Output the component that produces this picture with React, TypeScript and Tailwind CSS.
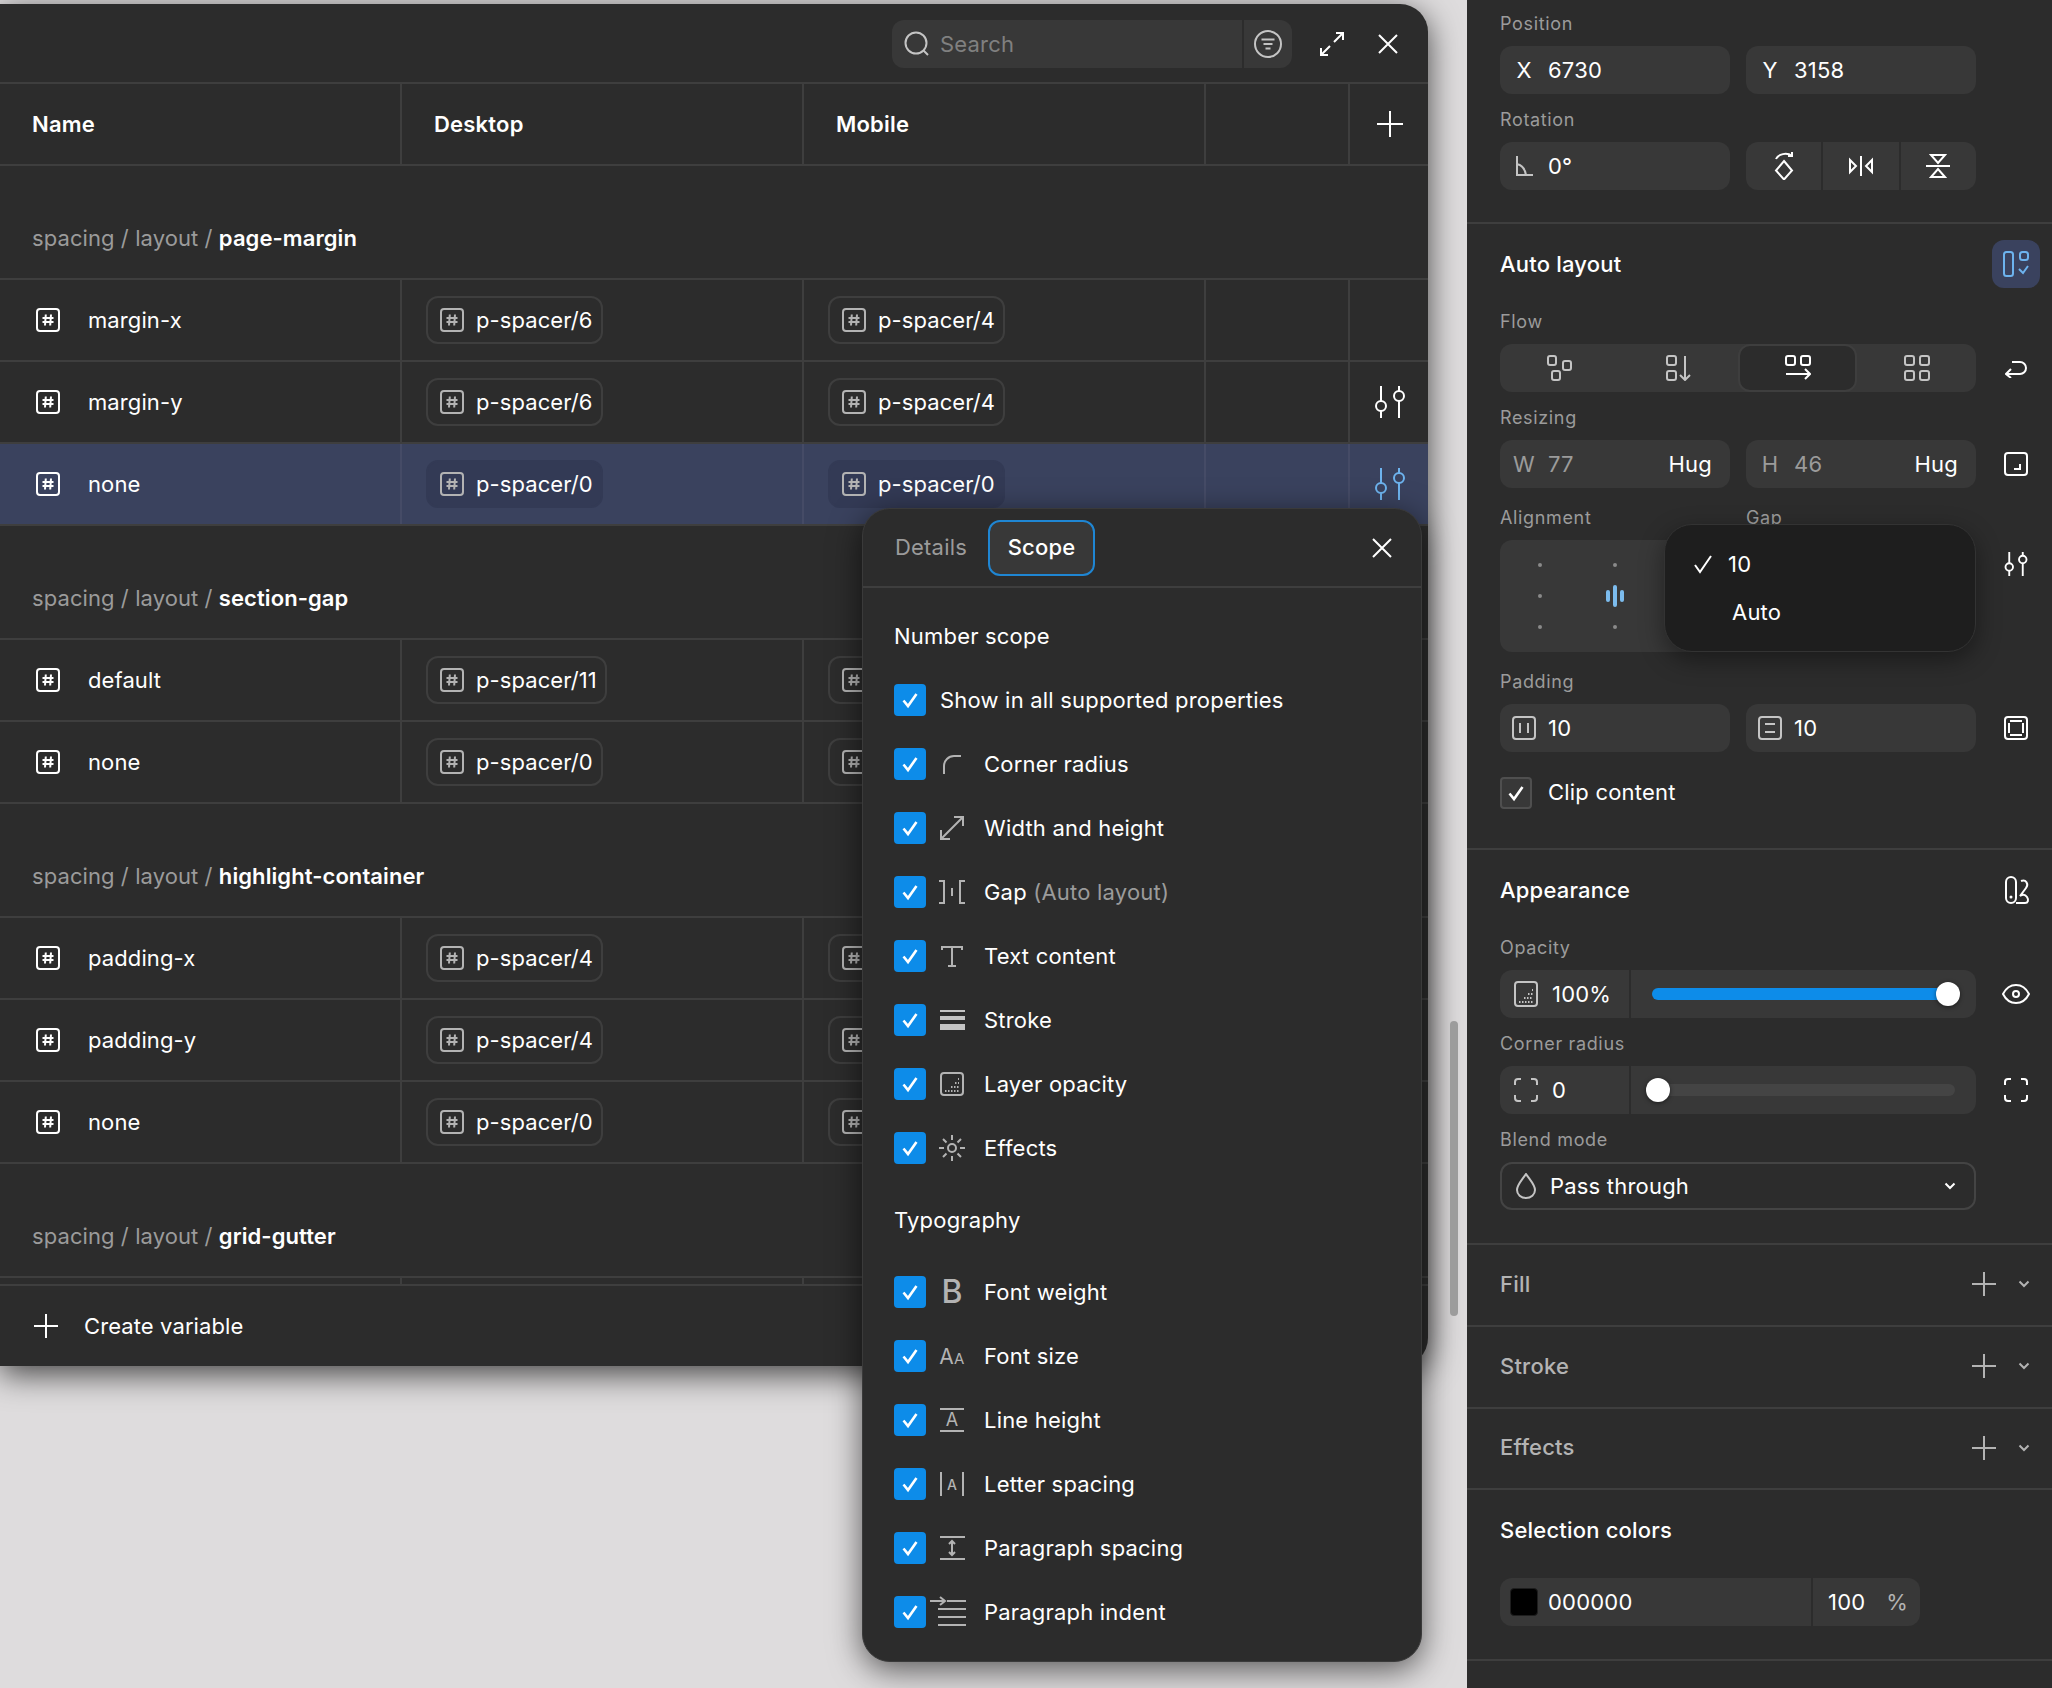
import type { ReactNode } from 'react';

const gridCols = 'grid grid-cols-[400px_402px_402px_144px_80px]';

function Svg({ w, h, className, children, sw = 2 }: { w: number; h: number; className?: string; children: ReactNode; sw?: number }) {
  return (
    <svg width={w} height={h} viewBox={`0 0 ${w} ${h}`} fill="none" stroke="currentColor" strokeWidth={sw} className={`shrink-0 ${className ?? ''}`}>
      {children}
    </svg>
  );
}

function HashIcon({ className }: { className?: string }) {
  return (
    <Svg w={24} h={24} className={className}>
      <rect x="1" y="1" width="22" height="22" rx="3" />
      <path d="M9.8 6.5 9 17.5M15 6.5l-.8 11M6.5 10h11M6.5 14h11" />
    </Svg>
  );
}

function SlidersIcon({ className, small }: { className?: string; small?: boolean }) {
  return (
    <svg width={small ? 24 : 30} height={small ? 24 : 32} viewBox="0 0 30 32" fill="none" stroke="currentColor" strokeWidth={small ? 2.5 : 2} className={`shrink-0 ${className ?? ''}`}>
      <path d="M6 0v15M6 25v7M24 0v5M24 15v17" />
      <circle cx="6" cy="20" r="5" />
      <circle cx="24" cy="10" r="5" />
    </svg>
  );
}

function CloseIcon() {
  return (
    <Svg w={22} h={22} className="text-white">
      <path d="M2 2l18 18M20 2L2 20" />
    </Svg>
  );
}

function PlusIcon({ size = 26, className }: { size?: number; className?: string }) {
  const m = size / 2;
  return (
    <Svg w={size} h={size} className={className}>
      <path d={`M${m} 0v${size}M0 ${m}h${size}`} />
    </Svg>
  );
}

function Chevron({ className }: { className?: string }) {
  return (
    <Svg w={12} h={8} className={className}>
      <path d="M1.5 1.5 6 6l4.5-4.5" />
    </Svg>
  );
}

function Chip({ value, selected }: { value: string; selected?: boolean }) {
  return (
    <div className={`inline-flex h-12 items-center gap-3 rounded-xl border-2 pl-3 pr-2 ${selected ? 'border-[#333a55] bg-[#333a55]' : 'border-[#3e3e3e]'}`}>
      <HashIcon className="text-[#b3b3b3]" />
      <span className="text-[22px] leading-none tracking-[0.08px] text-white">{value}</span>
    </div>
  );
}

type RowData = { name: string; desktop: string; mobile: string; tune?: boolean; selected?: boolean };

function Row({ name, desktop, mobile, tune, selected }: RowData) {
  const cell = `flex items-center border-l-2 ${selected ? 'border-[#454b66]' : 'border-[#3e3e3e]'}`;
  return (
    <div className={`${gridCols} h-[82px] border-b-2 border-[#3e3e3e] ${selected ? 'bg-[#3a425e]' : ''}`}>
      <div className="flex items-center pl-9">
        <HashIcon className="text-white" />
        <span className="ml-7 text-[22px] tracking-[0.1px] text-white">{name}</span>
      </div>
      <div className={`${cell} pl-6`}><Chip value={`p-spacer/${desktop}`} selected={selected} /></div>
      <div className={`${cell} pl-6`}><Chip value={`p-spacer/${mobile}`} selected={selected} /></div>
      <div className={cell} />
      <div className={`${cell} justify-center pl-[2px]`}>
        {tune && <SlidersIcon className={selected ? 'text-[#6db3ee]' : 'text-white'} />}
      </div>
    </div>
  );
}

function GroupTitle({ name }: { name: string }) {
  return (
    <div className="flex h-[114px] items-end border-b-2 border-[#3e3e3e] pb-[28px] pl-8 text-[22px] leading-[24px] tracking-[0.08px] text-[#9b9b9b]">
      <span>spacing / layout /&nbsp;</span>
      <span className="font-semibold text-white">{name}</span>
    </div>
  );
}

const pageMargin: RowData[] = [
  { name: 'margin-x', desktop: '6', mobile: '4' },
  { name: 'margin-y', desktop: '6', mobile: '4', tune: true },
  { name: 'none', desktop: '0', mobile: '0', tune: true, selected: true },
];
const sectionGap: RowData[] = [
  { name: 'default', desktop: '11', mobile: '8' },
  { name: 'none', desktop: '0', mobile: '0' },
];
const highlight: RowData[] = [
  { name: 'padding-x', desktop: '4', mobile: '4' },
  { name: 'padding-y', desktop: '4', mobile: '4' },
  { name: 'none', desktop: '0', mobile: '0' },
];

function VariablesWindow() {
  return (
    <div className="mt-1 flex h-[1362px] w-[1428px] flex-col overflow-hidden rounded-r-[28px] bg-[#2c2c2c] shadow-[0_8px_32px_rgba(0,0,0,0.7)]">
      <div className="flex h-[78px] shrink-0 items-center pl-[892px] pt-[2px]">
        <div className="flex h-12 w-[400px] items-stretch overflow-hidden rounded-xl bg-[#383838]">
          <div className="flex w-[350px] items-center pl-3">
            <Svg w={26} h={26} className="text-[#c4c4c4]">
              <circle cx="12" cy="12" r="10.5" />
              <path d="M19.5 19.5l4.5 4.5" />
            </Svg>
            <span className="ml-[10px] text-[22px] text-[#808080]">Search</span>
          </div>
          <div className="flex flex-1 items-center justify-center border-l-2 border-[#2c2c2c]">
            <Svg w={28} h={28} className="text-[#c4c4c4]">
              <circle cx="14" cy="14" r="13" />
              <path d="M7.5 9.5h13M9.5 14h9M11.5 18.5h5" />
            </Svg>
          </div>
        </div>
        <Svg w={24} h={24} className="ml-[28px] text-white">
          <path d="M14 10l9-9M16 1h7v7M10 14l-9 9M1 16v7h7" />
        </Svg>
        <div className="ml-[33px]"><CloseIcon /></div>
      </div>
      <div className="min-h-0 flex-1 overflow-hidden">
        <div className={`${gridCols} h-[84px] border-y-2 border-[#3e3e3e] text-[22px] font-semibold text-white`}>
          <div className="flex items-center pl-8">Name</div>
          <div className="flex items-center border-l-2 border-[#3e3e3e] pl-8">Desktop</div>
          <div className="flex items-center border-l-2 border-[#3e3e3e] pl-8">Mobile</div>
          <div className="border-l-2 border-[#3e3e3e]" />
          <div className="flex items-center justify-center border-l-2 border-[#3e3e3e] pl-[2px]">
            <PlusIcon />
          </div>
        </div>
        <GroupTitle name="page-margin" />
        {pageMargin.map((r) => <Row key={r.name} {...r} />)}
        <GroupTitle name="section-gap" />
        {sectionGap.map((r) => <Row key={r.name} {...r} />)}
        <GroupTitle name="highlight-container" />
        {highlight.map((r) => <Row key={r.name} {...r} />)}
        <GroupTitle name="grid-gutter" />
        <div className={`${gridCols} h-[6px]`}>
          <div />
          <div className="border-l-2 border-[#3e3e3e]" />
          <div className="border-l-2 border-[#3e3e3e]" />
          <div className="border-l-2 border-[#3e3e3e]" />
          <div className="border-l-2 border-[#3e3e3e]" />
        </div>
      </div>
      <div className="flex h-[82px] shrink-0 items-center border-t-2 border-[#3e3e3e] pl-[34px] text-[22px] text-white">
        <PlusIcon size={24} />
        <span className="ml-[26px] tracking-[0.1px]">Create variable</span>
      </div>
    </div>
  );
}

function Check() {
  return (
    <div className="flex size-8 shrink-0 items-center justify-center rounded-[4px] bg-[#0d8ce9]">
      <Svg w={18} h={18} sw={2.6} className="text-white">
        <path d="M2.5 9.5 7 15 15.5 3" />
      </Svg>
    </div>
  );
}

const grey = 'text-[#b3b3b3]';

const scopeIcons: Record<string, ReactNode> = {
  corner: (
    <Svg w={20} h={20} className={grey}><path d="M2 20v-8A10 10 0 0 1 12 2h7" /></Svg>
  ),
  size: (
    <Svg w={26} h={26} className={grey}><path d="M2 24 24 2M15 2h9v9M2 15v9h9" /></Svg>
  ),
  gap: (
    <Svg w={28} h={24} className={grey}><path d="M1 1h5v22H1M27 1h-5v22h5M14 8v8" /></Svg>
  ),
  text: (
    <Svg w={22} h={22} className={grey}><path d="M1 5V2h20v3M11 2v19M7 21h8" /></Svg>
  ),
  stroke: (
    <div className="flex w-[25px] flex-col gap-[4px]">
      <div className="h-[2px] bg-[#c4c4c4]" />
      <div className="h-[4px] bg-[#c4c4c4]" />
      <div className="h-[6px] bg-[#c4c4c4]" />
    </div>
  ),
  opacity: (
    <Svg w={24} h={24} className={grey}>
      <rect x="1" y="1" width="22" height="22" rx="3" />
      <path d="M5 19h14M11 15h8M15 11h4M18 7h1" strokeDasharray="1.5 1.5" />
    </Svg>
  ),
  effects: (
    <Svg w={28} h={28} className={grey}>
      <circle cx="14" cy="14" r="4" />
      <path d="M14 1v5M14 22v5M1 14h5M22 14h5M5 5l3.5 3.5M19.5 19.5 23 23M23 5l-3.5 3.5M8.5 19.5 5 23" />
    </Svg>
  ),
  weight: <span className="text-[32px] font-medium leading-none text-[#b3b3b3]">B</span>,
  fontSize: (
    <span className="flex items-baseline text-[#b3b3b3]">
      <span className="text-[21px] leading-none">A</span>
      <span className="text-[15px] leading-none">A</span>
    </span>
  ),
  lineHeight: (
    <div className="flex w-6 flex-col items-center border-y-2 border-[#b3b3b3] text-[18px] leading-[20px] text-[#b3b3b3]">A</div>
  ),
  letter: (
    <div className="flex h-6 w-6 items-center justify-center border-x-2 border-[#b3b3b3] text-[14px] font-medium text-[#b3b3b3]">A</div>
  ),
  paragraph: (
    <Svg w={26} h={24} className={grey}><path d="M1 1h25M1 23h25M13 5v14M10 8l3-3 3 3M10 16l3 3 3-3" /></Svg>
  ),
  indent: (
    <Svg w={36} h={32} className={`${grey} -ml-2`}>
      <path d="M0 5h14M10 1l5 4-5 4M17 5h19M8 13h28M8 21h28M8 29h28" />
    </Svg>
  ),
};

function ScopeRow({ icon, children }: { icon?: string; children: ReactNode }) {
  return (
    <div className="flex h-16 items-center text-[22px] text-white">
      <Check />
      {icon ? (
        <>
          <div className="flex w-[52px] justify-center">{scopeIcons[icon]}</div>
          <span className="ml-[6px]">{children}</span>
        </>
      ) : (
        <span className="ml-[14px]">{children}</span>
      )}
    </div>
  );
}

function ScopePopover() {
  return (
    <div className="absolute left-[862px] top-[508px] h-[1154px] w-[560px] rounded-[28px] border border-[#3a3a3a] bg-[#2c2c2c] shadow-[0_8px_32px_rgba(0,0,0,0.6)]">
      <div className="flex h-[79px] items-center border-b-2 border-[#3e3e3e] pl-[32px] pr-[28px]">
        <span className="text-[22px] text-[#9b9b9b]">Details</span>
        <div className="ml-[21px] flex h-[56px] w-[107px] items-center justify-center rounded-xl border-2 border-[#1f86d3] bg-[#383838] text-[22px] font-medium text-white">Scope</div>
        <div className="ml-auto"><CloseIcon /></div>
      </div>
      <div className="pl-[31px]">
        <div className="mt-6 flex h-12 items-center text-[22px] text-white">Number scope</div>
        <div className="mt-2">
          <ScopeRow>Show in all supported properties</ScopeRow>
          <ScopeRow icon="corner">Corner radius</ScopeRow>
          <ScopeRow icon="size">Width and height</ScopeRow>
          <ScopeRow icon="gap">Gap <span className="text-[#9b9b9b]">(Auto layout)</span></ScopeRow>
          <ScopeRow icon="text">Text content</ScopeRow>
          <ScopeRow icon="stroke">Stroke</ScopeRow>
          <ScopeRow icon="opacity">Layer opacity</ScopeRow>
          <ScopeRow icon="effects">Effects</ScopeRow>
        </div>
        <div className="mt-4 flex h-12 items-center text-[22px] text-white">Typography</div>
        <div className="mt-4">
          <ScopeRow icon="weight">Font weight</ScopeRow>
          <ScopeRow icon="fontSize">Font size</ScopeRow>
          <ScopeRow icon="lineHeight">Line height</ScopeRow>
          <ScopeRow icon="letter">Letter spacing</ScopeRow>
          <ScopeRow icon="paragraph">Paragraph spacing</ScopeRow>
          <ScopeRow icon="indent">Paragraph indent</ScopeRow>
        </div>
      </div>
    </div>
  );
}

function Label({ children, className }: { children: ReactNode; className?: string }) {
  return <div className={`h-6 text-[18px] leading-6 tracking-[0.65px] text-[#9b9b9b] ${className ?? ''}`}>{children}</div>;
}

function Field({ lead, children, right, muted }: { lead?: ReactNode; children?: ReactNode; right?: string; muted?: boolean }) {
  return (
    <div className="flex h-12 w-[230px] items-center rounded-xl bg-[#383838] text-[22px]">
      <div className={`flex w-12 shrink-0 justify-center ${muted ? 'text-[#9b9b9b]' : 'text-white'}`}>{lead}</div>
      <span className={muted ? 'text-[#9b9b9b]' : 'text-white'}>{children}</span>
      {right && <span className="ml-auto pr-[18px] text-white">{right}</span>}
    </div>
  );
}

function SideSlot({ children }: { children?: ReactNode }) {
  return <div className="ml-4 flex w-12 shrink-0 items-center justify-center text-white">{children}</div>;
}

function FlowCell({ active, children }: { active?: boolean; children: ReactNode }) {
  return (
    <div className={`flex h-12 items-center justify-center rounded-xl border-2 ${active ? 'border-[#3e3e3e] bg-[#2c2c2c] text-white' : 'border-transparent text-[#c4c4c4]'}`}>
      {children}
    </div>
  );
}

function Dot() {
  return <div className="flex h-[31px] items-center justify-center"><div className="size-[4px] rounded-full bg-[#8a8a8a]" /></div>;
}

function CornersIcon({ className }: { className?: string }) {
  return (
    <Svg w={24} h={24} className={className}>
      <path d="M1 7V4a3 3 0 0 1 3-3h3M17 1h3a3 3 0 0 1 3 3v3M23 17v3a3 3 0 0 1-3 3h-3M7 23H4a3 3 0 0 1-3-3v-3" />
    </Svg>
  );
}

function CollapsedSection({ title }: { title: string }) {
  return (
    <div className="flex h-[82px] items-center border-b-2 border-[#3e3e3e] pb-[2px] pl-[33px] text-[#b3b3b3]">
      <span className="text-[22px] font-medium">{title}</span>
      <PlusIcon size={24} className="ml-auto" />
      <Chevron className="ml-[22px] mr-[22px]" />
    </div>
  );
}

function PropertiesPanel() {
  return (
    <div className="w-[585px] shrink-0 bg-[#2c2c2c]">
      <div className="border-b-2 border-[#3e3e3e] pb-8 pl-[33px] pt-3">
        <Label className="mb-[10px]">Position</Label>
        <div className="flex gap-4">
          <Field lead="X">6730</Field>
          <Field lead="Y">3158</Field>
        </div>
        <Label className="mb-[10px] mt-[14px]">Rotation</Label>
        <div className="flex gap-4">
          <Field lead={
            <Svg w={18} h={20} className="text-[#c4c4c4]"><path d="M2 0v19h16M2 8c5 1 8 5 9 11" /></Svg>
          }>0°</Field>
          <div className="grid h-12 w-[230px] grid-cols-3 gap-[2px] overflow-hidden rounded-xl text-white">
            <div className="flex items-center justify-center bg-[#383838]">
              <Svg w={20} h={28}>
                <path d="M10 9l8 9.5-8 9-8-9zM2 7c2-5 11-7 16-3M18 0v4h-4" />
              </Svg>
            </div>
            <div className="flex items-center justify-center bg-[#383838]">
              <Svg w={24} h={20}>
                <path d="M12 0v20M1 4v12l6-6zM23 4v12l-6-6z" />
              </Svg>
            </div>
            <div className="flex items-center justify-center bg-[#383838]">
              <Svg w={24} h={24}>
                <path d="M0 12h24M5 1h14l-7 8zM5 23h14l-7-8z" />
              </Svg>
            </div>
          </div>
        </div>
      </div>

      <div className="relative border-b-2 border-[#3e3e3e] pb-[39px] pl-[33px] pt-4">
        <div className="flex h-12 items-center justify-between pr-3">
          <span className="text-[22px] font-medium text-white">Auto layout</span>
          <div className="flex size-12 items-center justify-center rounded-xl bg-[#3a425e] text-[#6db3ee]">
            <Svg w={26} h={26}>
              <rect x="1" y="1" width="9" height="24" rx="2.5" />
              <rect x="17" y="1" width="8" height="8" rx="2.5" />
              <path d="M16 18l4 4 5-7" />
            </Svg>
          </div>
        </div>
        <Label className="mb-[10px] mt-[22px]">Flow</Label>
        <div className="flex">
          <div className="grid h-12 w-[476px] grid-cols-4 rounded-xl bg-[#383838]">
            <FlowCell>
              <Svg w={26} h={26}>
                <rect x="1" y="1" width="8" height="9" rx="2" />
                <rect x="16" y="6" width="8" height="9" rx="2" />
                <rect x="5" y="16" width="8" height="9" rx="2" />
              </Svg>
            </FlowCell>
            <FlowCell>
              <Svg w={26} h={26}>
                <rect x="1" y="1" width="9" height="9" rx="2" />
                <rect x="1" y="16" width="9" height="9" rx="2" />
                <path d="M19 1v24M14 20l5 5 5-5" />
              </Svg>
            </FlowCell>
            <FlowCell active>
              <Svg w={26} h={26}>
                <rect x="1" y="1" width="9" height="9" rx="2" />
                <rect x="16" y="1" width="9" height="9" rx="2" />
                <path d="M1 19h24M20 14l5 5-5 5" />
              </Svg>
            </FlowCell>
            <FlowCell>
              <Svg w={26} h={26}>
                <rect x="1" y="1" width="9" height="9" rx="2" />
                <rect x="16" y="1" width="9" height="9" rx="2" />
                <rect x="1" y="16" width="9" height="9" rx="2" />
                <rect x="16" y="16" width="9" height="9" rx="2" />
              </Svg>
            </FlowCell>
          </div>
          <SideSlot>
            <Svg w={22} h={20}>
              <path d="M7 4h8a6 6 0 0 1 0 12H1M6 11l-5 5 5 4" />
            </Svg>
          </SideSlot>
        </div>
        <Label className="mb-[10px] mt-[14px]">Resizing</Label>
        <div className="flex gap-4">
          <Field lead="W" muted right="Hug">77</Field>
          <Field lead="H" muted right="Hug">46</Field>
          <div className="-ml-4 flex"><SideSlot>
            <Svg w={24} h={24}>
              <rect x="1" y="1" width="22" height="22" rx="3" />
              <path d="M16 12v5h-6" />
            </Svg>
          </SideSlot></div>
        </div>
        <div className="mt-[18px] flex">
          <div className="w-[246px]">
            <Label className="mb-[10px]">Alignment</Label>
            <div className="grid h-[112px] w-[230px] grid-cols-3 content-center rounded-xl bg-[#383838] px-[2px]">
              <Dot /><Dot /><Dot />
              <Dot />
              <div className="flex h-[31px] items-center justify-center gap-[3px]">
                <div className="h-3 w-[4px] rounded-full bg-[#7cbcee]" />
                <div className="h-[22px] w-[4px] rounded-full bg-[#7cbcee]" />
                <div className="h-3 w-[4px] rounded-full bg-[#7cbcee]" />
              </div>
              <Dot />
              <Dot /><Dot /><Dot />
            </div>
          </div>
          <div className="w-[230px]"><Label>Gap</Label></div>
          <div className="flex h-[70px] items-end">
            <SideSlot><SlidersIcon small /></SideSlot>
          </div>
        </div>
        <Label className="mb-[10px] mt-[18px]">Padding</Label>
        <div className="flex gap-4">
          <Field lead={
            <Svg w={24} h={24} className="text-[#c4c4c4]">
              <rect x="1" y="1" width="22" height="22" rx="3" />
              <path d="M8 7v10M16 7v10" />
            </Svg>
          }>10</Field>
          <Field lead={
            <Svg w={24} h={24} className="text-[#c4c4c4]">
              <rect x="1" y="1" width="22" height="22" rx="3" />
              <path d="M7 8h10M7 16h10" />
            </Svg>
          }>10</Field>
          <div className="-ml-4 flex"><SideSlot>
            <Svg w={24} h={24}>
              <rect x="1" y="1" width="22" height="22" rx="3" />
              <path d="M6 5h12M6 19h12M5 7v10M19 7v10" />
            </Svg>
          </SideSlot></div>
        </div>
        <div className="mt-6 flex items-center">
          <div className="flex size-8 items-center justify-center rounded-[4px] border-2 border-[#4f4f4f] bg-[#383838]">
            <Svg w={18} h={18} sw={2.6} className="text-white">
              <path d="M2.5 9.5 7 15 15.5 3" />
            </Svg>
          </div>
          <span className="ml-[16px] text-[22px] text-white">Clip content</span>
        </div>

        <div className="absolute left-[197px] top-[300px] h-[128px] w-[312px] rounded-[28px] border border-[#333] bg-[#1e1e1e] pt-[15px] text-[22px] text-white shadow-[0_8px_24px_rgba(0,0,0,0.4)]">
          <div className="flex h-12 items-center pl-[28px]">
            <Svg w={20} h={20}><path d="M2 11l5 7L18 2" /></Svg>
            <span className="ml-[15px]">10</span>
          </div>
          <div className="flex h-12 items-center pl-[67px]">Auto</div>
        </div>
      </div>

      <div className="border-b-2 border-[#3e3e3e] pb-[33px] pl-[33px] pt-4">
        <div className="flex h-12 items-center justify-between pr-5">
          <span className="text-[22px] font-medium text-white">Appearance</span>
          <Svg w={28} h={28} className="text-white">
            <path d="M7 1a5 5 0 0 1 5 5v16a5 5 0 0 1-10 0V6a5 5 0 0 1 5-5zM17 5c5-2 8 3 5 7l-6 8c3-2 5-2 7 1s1 6-2 6H12" />
            <circle cx="7" cy="21" r="1.5" fill="currentColor" stroke="none" />
          </Svg>
        </div>
        <Label className="mb-[10px] mt-[22px]">Opacity</Label>
        <div className="flex">
          <div className="flex h-12 w-[476px] items-center rounded-xl bg-[#383838]">
            <div className="flex w-[129px] items-center text-[22px] text-white">
              <div className="flex w-[52px] justify-center">
                <Svg w={24} h={26} className="text-[#c4c4c4]">
                  <rect x="1" y="1" width="22" height="24" rx="3" />
                  <path d="M5 21h14M10 17h9M14 13h5M18 9h1" strokeDasharray="1.5 1.5" />
                </Svg>
              </div>
              100%
            </div>
            <div className="flex h-full flex-1 items-center border-l-2 border-[#2c2c2c] px-[21px]">
              <div className="relative h-3 w-full rounded-full bg-[#0d8ce9]">
                <div className="absolute left-[284px] top-[-6px] size-6 rounded-full bg-white shadow-[0_1px_4px_rgba(0,0,0,0.5)]" />
              </div>
            </div>
          </div>
          <SideSlot>
            <Svg w={28} h={22}>
              <path d="M1 11C4 5 9 2 14 2s10 3 13 9c-3 6-8 9-13 9S4 17 1 11z" />
              <circle cx="14" cy="11" r="3" />
            </Svg>
          </SideSlot>
        </div>
        <Label className="mb-[10px] mt-[14px]">Corner radius</Label>
        <div className="flex">
          <div className="flex h-12 w-[476px] items-center rounded-xl bg-[#383838]">
            <div className="flex w-[129px] items-center text-[22px] text-white">
              <div className="flex w-[52px] justify-center"><CornersIcon className="text-[#c4c4c4]" /></div>
              0
            </div>
            <div className="flex h-full flex-1 items-center border-l-2 border-[#2c2c2c] px-[21px]">
              <div className="relative h-3 w-full rounded-full bg-[#444444]">
                <div className="absolute left-[-6px] top-[-6px] size-6 rounded-full bg-white shadow-[0_1px_4px_rgba(0,0,0,0.5)]" />
              </div>
            </div>
          </div>
          <SideSlot><CornersIcon /></SideSlot>
        </div>
        <Label className="mb-[10px] mt-[14px]">Blend mode</Label>
        <div className="flex h-12 w-[476px] items-center rounded-xl border-2 border-[#444444] text-[22px] text-white">
          <div className="flex w-12 justify-center">
            <Svg w={20} h={26} className="text-[#c4c4c4]"><path d="M10 1C6 7 1 12 1 17a9 8 0 0 0 18 0c0-5-5-10-9-16z" /></Svg>
          </div>
          Pass through
          <Chevron className="ml-auto mr-[18px] text-white" />
        </div>
      </div>

      <CollapsedSection title="Fill" />
      <CollapsedSection title="Stroke" />
      <div className="flex h-[81px] items-center border-b-2 border-[#3e3e3e] pb-[2px] pl-[33px] text-[#b3b3b3]">
        <span className="text-[22px] font-medium">Effects</span>
        <PlusIcon size={24} className="ml-auto" />
        <Chevron className="ml-[22px] mr-[22px]" />
      </div>

      <div className="border-b-2 border-[#3e3e3e] pb-[33px] pl-[33px] pt-4">
        <div className="flex h-12 items-center text-[22px] font-medium text-white">Selection colors</div>
        <div className="mt-6 flex h-12 w-[420px] items-center overflow-hidden rounded-xl bg-[#383838] text-[22px] text-white">
          <div className="ml-[10px] size-[28px] rounded-[4px] border border-[#1e1e1e] bg-black" />
          <span className="ml-[10px] w-[263px]">000000</span>
          <div className="h-full border-l-2 border-[#2c2c2c]" />
          <span className="ml-[15px]">100</span>
          <span className="ml-[21px] text-[#b3b3b3]">%</span>
        </div>
      </div>
    </div>
  );
}

export default function App() {
  return (
    <div className="flex h-[1688px] w-[2052px] overflow-hidden bg-[#dedcdd] font-['Inter',sans-serif] tracking-[0.2px]">
      <div className="relative w-[1467px] shrink-0">
        <VariablesWindow />
        <ScopePopover />
        <div className="absolute left-[1450px] top-[1021px] h-[295px] w-2 rounded-full bg-[#9c9c9c]" />
      </div>
      <PropertiesPanel />
    </div>
  );
}
